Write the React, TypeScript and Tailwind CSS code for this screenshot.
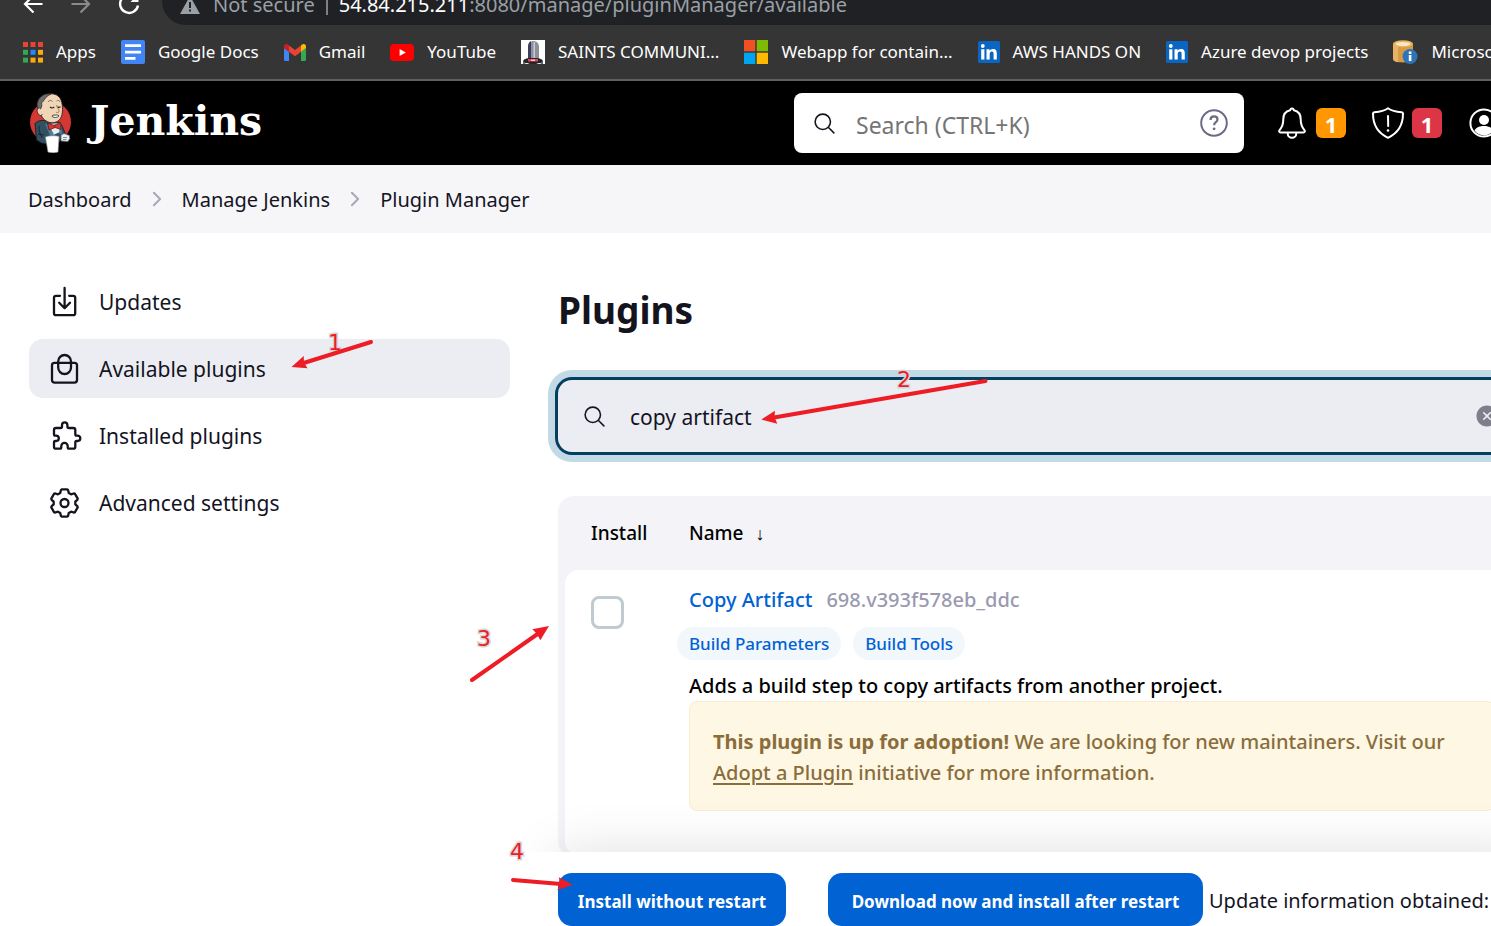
import type { ReactNode } from "react";
import { IoSearchOutline, IoCloseCircle, IoChevronForward } from "react-icons/io5";

function BackIcon() {
  return (
    <svg width="24" height="24" viewBox="0 0 24 24" fill="none" stroke="#fff" strokeWidth="2.2">
      <path d="M21.500 12H4M12.500 3.500 4 12l8.500 8.500" />
    </svg>
  );
}

function ForwardIcon() {
  return (
    <svg width="24" height="24" viewBox="0 0 24 24" fill="none" stroke="#8a8b8c" strokeWidth="2.200">
      <path d="M2.500 12H20M11.500 3.500 20 12l-8.500 8.500" />
    </svg>
  );
}

function ReloadIcon() {
  return (
    <svg width="24" height="24" viewBox="0 0 24 24" fill="none" stroke="#fff" strokeWidth="2.400">
      <path d="M18.500 5.500A9 9 0 1 0 21 13.500" />
      <path d="M21.500 2v8h-8z" fill="#fff" stroke="none" />
    </svg>
  );
}

function WarningIcon() {
  return (
    <svg width="20" height="20" viewBox="0 0 20 20">
      <path d="M10 1 20 19H0z" fill="#9aa0a6" />
      <path d="M9 7h2v6H9zM9 14.500h2v2H9z" fill="#202124" />
    </svg>
  );
}

function AppsIcon() {
  const cells = [
    "#ea4335", "#ea4335", "#ea4335",
    "#34a853", "#1a8cff", "#fbab0b",
    "#34a853", "#fbab0b", "#fbab0b",
  ];
  return (
    <svg width="20" height="21" viewBox="0 0 20 21">
      {cells.map((c, i) => (
        <rect key={i} x={(i % 3) * 7.500} y={Math.floor(i / 3) * 7.800} width="5" height="5" fill={c} />
      ))}
    </svg>
  );
}

function DocsIcon() {
  return (
    <svg width="24" height="24" viewBox="0 0 24 24">
      <rect width="24" height="24" rx="2" fill="#4285f4" />
      <path d="M4 4.300h16v2.800H4zM4 10.700h16v2.800H4zM4 17h10.500v2.800H4z" fill="#fff" />
    </svg>
  );
}

function GmailIcon() {
  return (
    <svg width="22" height="17" viewBox="0 0 22 17">
      <path d="M0 4v11.500Q0 17 1.500 17H5V7.500z" fill="#4285f4" />
      <path d="M22 4v11.500q0 1.500-1.500 1.500H17V7.500z" fill="#34a853" />
      <path d="M17 1.500v6.200l5-3.700V2.300C22 .2 19.600-.7 18 .6z" fill="#fbbc04" />
      <path d="M5 7.700V1.500L11 6l6-4.500v6.200L11 12.200z" fill="#ea4335" />
      <path d="M0 2.300V4l5 3.700V1.500L4 .6C2.400-.7 0 .2 0 2.300z" fill="#c5221f" />
    </svg>
  );
}

function YouTubeIcon() {
  return (
    <svg width="24" height="17" viewBox="0 0 24 17">
      <rect width="24" height="17" rx="4" fill="#f00" />
      <path d="m9.600 4.900 6.200 3.600-6.200 3.600z" fill="#fff" />
    </svg>
  );
}

function TowerIcon() {
  return (
    <svg width="24" height="24" viewBox="0 0 24 24">
      <rect width="24" height="24" fill="#fff" />
      <path d="M7 19V7c0-8 11-8 11 0v12z" fill="#8d9098" />
      <path d="M7 19V7c0-3 1-5 3-6v18z" fill="#3c3f63" />
      <path d="M12.500 2h1.500v16h-1.500z" fill="#c9cbd0" />
      <path d="M2 21c1-2.500 5-3 10-3s9 .5 10 3l-1 2.500-3-.5-3 1h-6l-3-1-3 .5z" fill="#2a2326" />
      <path d="M7 19h10v2.500H7z" fill="#e0455a" />
      <path d="M10 19.700h4v1h-4z" fill="#fff" />
      <path d="M2 22h2v2H2zM20 22h2v2h-2z" fill="#596b8c" />
    </svg>
  );
}

function MicrosoftIcon() {
  return (
    <svg width="24" height="24" viewBox="0 0 24 24">
      <path d="M0 0h11.300v11.300H0z" fill="#f25022" />
      <path d="M12.700 0H24v11.300H12.700z" fill="#7fba00" />
      <path d="M0 12.700h11.300V24H0z" fill="#00a4ef" />
      <path d="M12.700 12.700H24V24H12.700z" fill="#ffb900" />
    </svg>
  );
}

function LinkedInIcon() {
  return (
    <svg width="22" height="22" viewBox="0 0 22 22">
      <rect width="22" height="22" rx="1.500" fill="#0a66c2" />
      <circle cx="4.800" cy="5" r="1.900" fill="#fff" />
      <path d="M3.200 8.200h3.200v10.300H3.200zM8.500 8.200h3v1.500c.6-1 1.800-1.800 3.500-1.800 3 0 3.800 2 3.800 4.700v5.900h-3.200v-5.300c0-1.400-.2-2.600-1.700-2.600-1.600 0-2.200 1.100-2.200 2.600v5.300H8.500z" fill="#fff" />
    </svg>
  );
}

function DatabaseIcon() {
  return (
    <svg width="25" height="24" viewBox="0 0 25 24">
      <path d="M0 3.500V19c0 4.500 20 4.500 20 0V3.500z" fill="#d79a45" />
      <path d="M0 3.500V19c0 1.500 2 2.700 5 3.200V6z" fill="#e8b365" />
      <ellipse cx="10" cy="3.800" rx="10" ry="3.600" fill="#e9b15c" />
      <ellipse cx="10" cy="4" rx="7.500" ry="2" fill="#f8e6c4" />
      <circle cx="17" cy="16.500" r="7.500" fill="#2f74b9" />
      <path d="M15.800 11.500h2.600v2.400h-2.600zM15.800 15h2.600v6h-2.600z" fill="#fff" />
    </svg>
  );
}

function ButlerLogo() {
  return (
    <svg width="44" height="60" viewBox="0 0 44 60">
      <ellipse cx="22.500" cy="29" rx="20.500" ry="20.500" fill="#d33833" />
      <path d="M7 30.500C10 28 13 26.500 18 28l9 1c4 0 6 1 7 4l3.500 8-4 4-3 5c-5 1.500-11 1-17 0L8.500 47z" fill="#335061" stroke="#14202a" strokeWidth=".9" />
      <path d="M11 33c0 5 1 9 3.500 12M10 41l6 1" stroke="#14202a" strokeWidth=".9" fill="none" />
      <path d="m20 31 5 11 7-3 1-9z" fill="#e9edf0" />
      <path d="m21 32 5 9.500-4 1-5-12zM32 33l-1 7 3 2-.500-9z" fill="#4d7d94" />
      <path d="M11 10c-1 4 0 9 3 14 3 4.500 8 6.500 12.500 5.500 5.500-1 8-6 8-13C34.500 6 31 .8 23 .8S12 5 11 10z" fill="#f0d6b7" stroke="#2b2320" strokeWidth=".9" />
      <path d="M23 1C15 0 9.500 5 9 12l1 5 2.500-1c1.500-2 1.500-4 1-6 2.500-1.500 3-6 9.500-9z" fill="#6d6b6d" stroke="#2b2320" strokeWidth=".7" />
      <path d="M11.500 15c-3.500 0-3 6 1 7.500l2-1" fill="#f0d6b7" stroke="#2b2320" strokeWidth=".8" />
      <path d="M20 9c1-2 3.500-2 4.500-.5M28.500 8c1-1 2.500-1 3.500 1" stroke="#6d5b50" strokeWidth=".8" fill="none" />
      <path d="M22 14c1.300 1.200 3 1.200 4.300-.2M29.500 13.700c.8.8 2 .8 3 0" stroke="#2b2320" strokeWidth="1.100" fill="none" />
      <path d="M28.500 12c.5 3 3.500 6 2.500 7-.8.8-2 .6-3 .2" stroke="#a4704f" strokeWidth=".9" fill="none" />
      <path d="M24 23.500c2 1.500 5.500 1.300 7-.6l-2-1.100-2 .4-2-.2z" fill="#fff" stroke="#2b2320" strokeWidth=".8" />
      <path d="m19.500 30 6.500 2.500 6.500-3 .5 7-6-2-6 2.500z" fill="#d33833" stroke="#5a1512" strokeWidth=".8" />
      <circle cx="26.500" cy="33" r="1.400" fill="#b02924" />
      <path d="M17.500 44c4-1.500 10-1.500 13.500-.5L30 59c-3.500 1.200-7 .8-10 0z" fill="#fff" stroke="#9aa3aa" strokeWidth=".6" />
      <path d="m33 42 3-1.500 5.500 2 .3 3-1.800 3-7-.5z" fill="#eef1f3" stroke="#59646b" strokeWidth=".8" />
      <path d="M35 44.500h4M35 46.500h3.500" stroke="#59646b" strokeWidth=".7" />
    </svg>
  );
}

function HelpIcon() {
  return (
    <svg width="28" height="28" viewBox="0 0 28 28" fill="none" stroke="#6b6b87">
      <circle cx="14" cy="14" r="12.800" strokeWidth="2" />
      <path d="M10.500 11c0-2.200 1.500-3.600 3.500-3.600s3.500 1.300 3.500 3.100c0 2.800-3.400 2.600-3.400 5.700" strokeWidth="2.200" />
      <circle cx="14.100" cy="19.800" r="1.400" fill="#6b6b87" stroke="none" />
    </svg>
  );
}

function BellIcon() {
  return (
    <svg width="28" height="32" viewBox="0 0 28 32" fill="none" stroke="#fff" strokeWidth="2" strokeLinejoin="round">
      <path d="M14 1.500c1 0 1.600.6 1.900 1.700 4.300.9 6.800 4.400 6.800 9.100 0 5.500 1.200 8 3.700 10.800.9 1 .4 2.400-1 2.400H2.600c-1.400 0-1.900-1.400-1-2.400 2.500-2.800 3.700-5.300 3.700-10.800 0-4.700 2.500-8.200 6.800-9.100.3-1.100.9-1.700 1.900-1.700z" />
      <path d="M9.700 25.500v1a4.300 4.300 0 0 0 8.600 0v-1" />
    </svg>
  );
}

function ShieldIcon() {
  return (
    <svg width="32" height="32" viewBox="0 0 32 32" fill="none" stroke="#fff" strokeWidth="2" strokeLinejoin="round" strokeLinecap="round">
      <path d="M16 1.200C12.500 3.800 7.500 4.800 2.300 5.200 1.500 5.300 1 5.800 1 6.600 1 18 5.500 26 16 30.800 26.500 26 31 18 31 6.600c0-.8-.5-1.300-1.300-1.400C24.500 4.800 19.500 3.800 16 1.200z" />
      <path d="m16 9 .2 10" />
      <circle cx="16" cy="23.500" r="1.300" fill="#fff" stroke="none" />
    </svg>
  );
}

function NavIcon({ children }: { children: ReactNode }) {
  return (
    <svg
      width="30"
      height="30"
      viewBox="0 0 30 30"
      fill="none"
      stroke="currentColor"
      strokeWidth="2.300"
      strokeLinecap="round"
      strokeLinejoin="round"
      className="shrink-0 overflow-visible"
    >
      {children}
    </svg>
  );
}

function DownloadIcon() {
  return (
    <NavIcon>
      <path d="M11 8.800H7a2 2 0 0 0-2 2v15.400a2 2 0 0 0 2 2h17.200a2 2 0 0 0 2-2V10.800a2 2 0 0 0-2-2h-4" />
      <path d="M15.600.8v20.400M10.200 15.800l5.400 5.400 5.400-5.400" />
    </NavIcon>
  );
}

function BagIcon() {
  return (
    <NavIcon>
      <rect x="3" y="8.800" width="25" height="19.800" rx="2.500" />
      <rect x="9.200" y="1" width="12.800" height="19" rx="6.400" />
    </NavIcon>
  );
}

function PuzzleIcon() {
  return (
    <NavIcon>
      <path d="M7 7h4.600q1.400 0 1.400-1.500V4a2.700 2.700 0 0 1 5.400 0v1.500Q18.400 7 19.800 7h4.500a2 2 0 0 1 2 2v4.200q0 1.400 1.300 1.400h1a2.700 2.700 0 0 1 0 5.400h-1q-1.300 0-1.300 1.400v4.300a2 2 0 0 1-2 2h-4.200q-1.400 0-1.400-1.400v-1.200a3.200 3.200 0 0 0-6.400 0v1.200q0 1.400-1.400 1.400H7a2 2 0 0 1-2-2v-4.200Q5 20 6.300 20h.8a2.700 2.700 0 0 0 0-5.400h-.8Q5 14.600 5 13.200V9a2 2 0 0 1 2-2z" />
    </NavIcon>
  );
}

const polar = (deg: number, r: number) => {
  const a = (deg * Math.PI) / 180;
  return `${(15.5 + r * Math.cos(a)).toFixed(2)},${(15 + r * Math.sin(a)).toFixed(2)}`;
};

const gearPoints = [0, 1, 2, 3, 4, 5]
  .flatMap((k) => {
    const c = -90 + k * 60;
    return [polar(c - 16, 13.2), polar(c - 12, 13.9), polar(c + 12, 13.9), polar(c + 16, 13.2), polar(c + 23, 10.900), polar(c + 37, 10.900)];
  })
  .join(" ");

function GearIcon() {
  return (
    <NavIcon>
      <polygon points={gearPoints} />
      <circle cx="15.500" cy="15" r="4" />
    </NavIcon>
  );
}

const bookmarks: { label: string; icon: ReactNode }[] = [
  { label: "Apps", icon: <AppsIcon /> },
  { label: "Google Docs", icon: <DocsIcon /> },
  { label: "Gmail", icon: <GmailIcon /> },
  { label: "YouTube", icon: <YouTubeIcon /> },
  { label: "SAINTS COMMUNI...", icon: <TowerIcon /> },
  { label: "Webapp for contain...", icon: <MicrosoftIcon /> },
  { label: "AWS HANDS ON", icon: <LinkedInIcon /> },
  { label: "Azure devop projects", icon: <LinkedInIcon /> },
  { label: "Microsoft", icon: <DatabaseIcon /> },
];

const navItems: { label: string; icon: ReactNode; active?: boolean }[] = [
  { label: "Updates", icon: <DownloadIcon /> },
  { label: "Available plugins", icon: <BagIcon />, active: true },
  { label: "Installed plugins", icon: <PuzzleIcon /> },
  { label: "Advanced settings", icon: <GearIcon /> },
];

const crumbs = ["Dashboard", "Manage Jenkins", "Plugin Manager"];

const notes = [
  { n: "1", x: 335, y: 350, line: "M371 342 302 363.500", head: "M291.500 367 303.700 356l.3 6.500 3.500 5.800z" },
  { n: "2", x: 904, y: 387, line: "M985.500 381 774 417.500", head: "M761.300 419.500 775 410.700l-.5 6.500 2.800 6.500z" },
  { n: "3", x: 484, y: 646, line: "M472 680 539 633", head: "M549 626l-16.700 3.300 4.500 4.500 3.500 6.500z" },
  { n: "4", x: 517, y: 859, line: "M513 880 561 884", head: "M572.700 884.700 558.700 877.300l1.500 6.500-2.900 6.200z" },
];

function BrowserChrome() {
  return (
    <div className="shrink-0 border-b-2 border-[#5f6062] bg-[#353535]">
      <div className="flex h-[25px] items-end overflow-hidden pl-[21px]">
        <div className="flex shrink-0 gap-6 pb-[9px]">
          <button aria-label="Back"><BackIcon /></button>
          <button aria-label="Forward"><ForwardIcon /></button>
          <button aria-label="Reload"><ReloadIcon /></button>
        </div>
        <div className="ml-[21px] flex h-[25px] flex-1 items-end rounded-bl-[24px] bg-[#202124] pb-[6px] pl-[18px] text-[20px] leading-[28px] whitespace-nowrap text-[#9aa0a6]">
          <span className="pb-1"><WarningIcon /></span>
          <span className="ml-[13px]">Not secure</span>
          <span className="mx-[11px] mb-1 h-6 w-[2px] shrink-0 bg-[#7d8084]" />
          <span><span className="text-white">54.84.215.211</span>:8080/manage/pluginManager/available</span>
        </div>
      </div>
      <nav aria-label="Bookmarks" className="flex h-[54px] items-center gap-[25px] overflow-hidden pl-[23px] text-[17px] whitespace-nowrap text-white">
        {bookmarks.map((b) => (
          <a key={b.label} href="#" className="flex shrink-0 items-center gap-[13px]">
            {b.icon}
            <span>{b.label}</span>
          </a>
        ))}
      </nav>
    </div>
  );
}

function Header() {
  return (
    <header className="flex h-[84px] shrink-0 items-center overflow-hidden bg-black pl-7 text-white">
      <a href="#" className="flex items-center gap-[18px]">
        <ButlerLogo />
        <span className="pb-1 font-['DejaVu_Serif'] text-[41px] leading-[48px] font-bold">Jenkins</span>
      </a>
      <div className="ml-auto flex h-[60px] w-[450px] shrink-0 items-center rounded-lg bg-white pr-4 pl-[18px] text-[#14141f]">
        <IoSearchOutline size={25} />
        <input
          aria-label="Search"
          placeholder="Search (CTRL+K)"
          className="ml-[19px] min-w-0 flex-1 pt-1 text-[23px] outline-none placeholder:text-[#757575]"
        />
        <button aria-label="Help"><HelpIcon /></button>
      </div>
      <button aria-label="Notifications" className="ml-[34px] flex shrink-0 items-center gap-[10px]">
        <BellIcon />
        <span className="flex size-[30px] items-center justify-center rounded-md bg-[#fe9700] pt-[2px] text-[22px] font-bold">1</span>
      </button>
      <button aria-label="Security warnings" className="ml-[26px] flex shrink-0 items-center gap-2">
        <ShieldIcon />
        <span className="flex size-[30px] items-center justify-center rounded-md bg-[#dc3545] pt-[2px] text-[22px] font-bold">1</span>
      </button>
      <button aria-label="Account" className="-mr-3 ml-[25px] shrink-0">
        <svg width="36" height="36" viewBox="0 0 36 36">
          <circle cx="17" cy="18" r="13.600" fill="none" stroke="#fff" strokeWidth="2" />
          <circle cx="17" cy="15" r="5" fill="#fff" />
          <path d="M7.500 25.500c2-3.500 5.500-4.500 9.500-4.500s7.500 1 9.500 4.500c-5 6.500-14 6.500-19 0z" fill="#fff" />
        </svg>
      </button>
    </header>
  );
}

function PluginTable() {
  return (
    <div className="mt-[44px] rounded-2xl bg-[#f3f3f8] px-[7px] pb-[2px]">
      <table className="w-full border-separate border-spacing-0 text-left">
        <thead>
          <tr className="h-[74px] text-[19px] text-black">
            <th className="w-[98px] pl-[26px] font-medium">Install</th>
            <th className="pl-[26px] font-medium">Name<span className="ml-3 text-[18px] font-normal">↓</span></th>
          </tr>
        </thead>
        <tbody>
          <tr className="align-top">
            <td className="rounded-l-[14px] bg-white pt-[26px] pl-[26px]">
              <input
                type="checkbox"
                aria-label="Install Copy Artifact"
                className="block size-[33px] appearance-none rounded-lg border-3 border-[#c0cbd0] bg-white"
              />
            </td>
            <td className="rounded-r-[14px] bg-white pt-[14px] pr-[26px] pb-[44px] pl-[26px] text-[20px] leading-[31px] font-medium text-black">
              <div className="flex gap-[14px]">
                <a href="#" className="text-[#0062d3]">Copy Artifact</a>
                <span className="text-[#9a9ab0]">698.v393f578eb_ddc</span>
              </div>
              <div className="mt-3 -ml-3 flex gap-3 text-[17px] leading-[33px] text-[#0062d3]">
                <a href="#" className="rounded-full bg-[#f2f7fc] px-3">Build Parameters</a>
                <a href="#" className="rounded-full bg-[#f2f7fc] px-3">Build Tools</a>
              </div>
              <p className="mt-[10px]">Adds a build step to copy artifacts from another project.</p>
              <div className="rounded-lg border border-[#faebcc] bg-[#fdf7e3] pt-6 pr-[23px] pb-[22px] pl-[23px] text-[#8a6d3b]">
                <strong className="font-bold">This plugin is up for adoption!</strong> We are looking for new maintainers. Visit our{" "}
                <a href="#" className="underline decoration-2 underline-offset-3">Adopt a Plugin</a> initiative for more information.
              </div>
            </td>
          </tr>
        </tbody>
      </table>
    </div>
  );
}

function Annotations() {
  return (
    <svg aria-hidden="true" className="pointer-events-none absolute top-0 left-0 size-full overflow-hidden">
      {notes.map((a) => (
        <g key={a.n}>
          <text
            x={a.x}
            y={a.y}
            textAnchor="middle"
            fill="#ee1c25"
            stroke="#d6d6da"
            strokeWidth="3"
            paintOrder="stroke"
            className="font-['DejaVu_Sans'] text-[22px]"
          >
            {a.n}
          </text>
          <path d={a.line} stroke="#ee1c25" strokeWidth="4" strokeLinecap="round" />
          <path d={a.head} fill="#ee1c25" />
        </g>
      ))}
    </svg>
  );
}

export default function App() {
  return (
    <div className="relative flex h-screen flex-col overflow-hidden bg-white font-['Noto_Sans','Open_Sans',sans-serif] text-[#14141f]">
      <BrowserChrome />
      <Header />
      <nav aria-label="Breadcrumb" className="flex h-[68px] shrink-0 items-center bg-[#f6f6f9] pl-7 text-[20px]">
        {crumbs.map((c, i) => (
          <span key={c} className="flex items-center">
            {i > 0 && <IoChevronForward size={22} className="mx-[14px] text-[#a8a8bd]" />}
            <a href="#" className="pt-[2px]">{c}</a>
          </span>
        ))}
      </nav>
      <div className="-mr-[37px] flex min-h-0 flex-1">
        <aside className="w-[510px] shrink-0 pt-[39px] pl-[29px]">
          <nav aria-label="Plugin sections" className="flex flex-col gap-2">
            {navItems.map((item) => (
              <a
                key={item.label}
                href="#"
                className={`flex h-[59px] items-center gap-5 rounded-[14px] pl-5 text-[21px] ${item.active ? "bg-[#ecedf3]" : ""}`}
              >
                {item.icon}
                <span className="pt-[2px]">{item.label}</span>
              </a>
            ))}
          </nav>
        </aside>
        <main className="flex min-w-0 flex-1 flex-col">
          <div className="min-h-0 flex-1 overflow-y-auto pl-12 [scrollbar-width:none]">
            <h1 className="mt-[52px] text-[37px] leading-[50px] font-bold">Plugins</h1>
            <div className="mt-[45px] flex h-[72px] items-center rounded-[14px] bg-[#ecedf3] pr-[28px] pl-6 shadow-[0_0_0_3px_#053f5f,0_0_0_10px_#c2d9e6]">
              <IoSearchOutline size={25} className="shrink-0" />
              <input
                aria-label="Search plugins"
                defaultValue="copy artifact"
                className="ml-[23px] min-w-0 flex-1 pt-1 text-[21px] outline-none"
              />
              <button aria-label="Clear" className="text-[#7f7f8b]"><IoCloseCircle size={26} /></button>
            </div>
            <PluginTable />
          </div>
          <div className="relative flex h-[74px] shrink-0 items-center bg-white pl-12">
            <div className="pointer-events-none absolute bottom-full left-0 h-12 w-full overflow-hidden">
              <div className="absolute top-full right-0 left-12 h-40 shadow-[0_0_50px_rgba(0,0,0,0.13)]" />
            </div>
            <div className="flex items-center pt-[21px] whitespace-nowrap">
              <button className="h-[53px] w-[228px] rounded-[14px] bg-[#0062d3] pt-1 text-[17px] font-bold text-white">Install without restart</button>
              <button className="ml-[42px] h-[53px] w-[375px] rounded-[14px] bg-[#0062d3] pt-1 text-[17px] font-bold text-white">Download now and install after restart</button>
              <span className="ml-[6px] pt-[2px] text-[20px]">Update information obtained:</span>
            </div>
          </div>
        </main>
      </div>
      <Annotations />
    </div>
  );
}
